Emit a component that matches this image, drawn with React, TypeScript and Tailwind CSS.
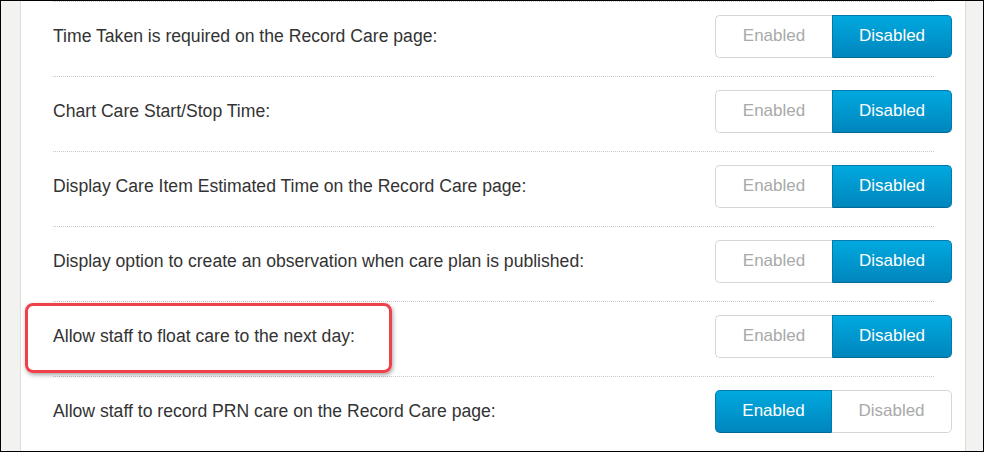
import React from "react";

const rows: { label: string; enabled: boolean; highlight?: boolean }[] = [
  { label: "Time Taken is required on the Record Care page:", enabled: false },
  { label: "Chart Care Start/Stop Time:", enabled: false },
  { label: "Display Care Item Estimated Time on the Record Care page:", enabled: false },
  { label: "Display option to create an observation when care plan is published:", enabled: false },
  { label: "Allow staff to float care to the next day:", enabled: false, highlight: true },
  { label: "Allow staff to record PRN care on the Record Care page:", enabled: true },
];

function Toggle({ enabled }: { enabled: boolean }) {
  const active =
    "bg-gradient-to-b from-[#00a9df] to-[#0086bd] text-white border border-[#0079ab] border-b-[#006a96]";
  const inactive = "bg-white text-[#a9a9a9] border border-[#d6d6d6]";
  return (
    <div className="flex h-[43px] text-[17px]">
      <div
        className={`w-[117px] flex items-center justify-center rounded-l-[5px] ${
          enabled ? active : inactive + " border-r-0"
        }`}
      >
        Enabled
      </div>
      <div
        className={`w-[120px] flex items-center justify-center rounded-r-[5px] ${
          enabled ? inactive + " border-l-0" : active
        }`}
      >
        Disabled
      </div>
    </div>
  );
}

export default function App() {
  return (
    <div
      className="w-[984px] h-[452px] border border-black flex bg-white overflow-hidden"
      style={{ fontFamily: '"Liberation Sans", Arial, sans-serif' }}
    >
      <div className="w-[20px] bg-[#f2f2f0] border-r border-[#dcdcda]" />
      <div className="flex-1 relative">
        <div className="pl-[32px] pr-[13px]">
          {rows.map((r, i) => (
            <div
              key={i}
              className="h-[75px] pb-[6px] border-t border-dotted border-[#c8c8c8] flex items-center justify-between mr-[18px]"
            >
              <span className="text-[17.6px] text-[#333333]">{r.label}</span>
              <div className="-mr-[18px]">
                <Toggle enabled={r.enabled} />
              </div>
            </div>
          ))}
        </div>
        <div className="absolute left-[4px] top-[302px] w-[367px] h-[70px] rounded-[8px] border-[3px] border-[#ef4149] shadow-[1px_2px_4px_rgba(0,0,0,0.35)]" />
      </div>
      <div className="w-[18px] bg-[#f2f2f0] border-l border-[#dcdcda]" />
    </div>
  );
}
